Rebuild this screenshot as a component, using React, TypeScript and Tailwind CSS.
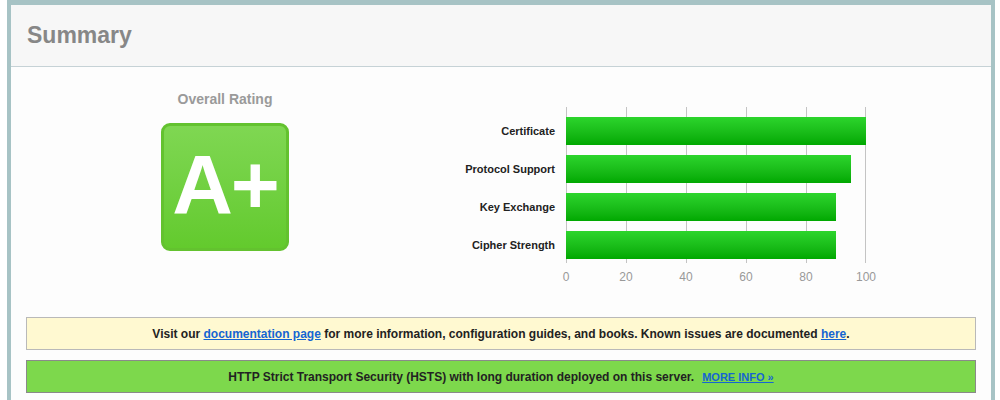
const bars = [
  { label: "Certificate", value: 100 },
  { label: "Protocol Support", value: 95 },
  { label: "Key Exchange", value: 90 },
  { label: "Cipher Strength", value: 90 },
];

const ticks = [0, 20, 40, 60, 80, 100];

function RatingChart() {
  return (
    <div className="flex">
      <div className="flex w-[127px] flex-col gap-[10px] pt-[10px] pr-[11px]">
        {bars.map(b => (
          <div key={b.label} className="flex h-[28px] items-center justify-end text-[11px] font-bold text-[#222]">
            {b.label}
          </div>
        ))}
      </div>
      <div className="w-[300px]">
        <div className="relative h-[156px]">
          {ticks.map(t => (
            <div
              key={t}
              className="absolute top-0 bottom-0 w-px bg-[#c4c4c4]"
              style={{ left: `${t * 3 - (t === 100 ? 1 : 0)}px` }}
            />
          ))}
          <div className="relative flex flex-col gap-[10px] pt-[10px]">
            {bars.map(b => (
              <div
                key={b.label}
                className="h-[28px] bg-gradient-to-b from-[#2cd52c] to-[#00a800]"
                style={{ width: `${b.value * 3}px` }}
              />
            ))}
          </div>
        </div>
        <div className="relative h-[20px] text-[12px] text-[#999]">
          {ticks.map(t => (
            <span
              key={t}
              className="absolute top-[5px] -translate-x-1/2"
              style={{ left: `${t * 3}px` }}
            >
              {t}
            </span>
          ))}
        </div>
      </div>
    </div>
  );
}

export default function App() {
  return (
    <div className="h-[400px] w-[1000px] overflow-hidden bg-white pl-[7px] pr-[5px] font-['Liberation_Sans',Arial,sans-serif]">
      <div className="h-[420px] border-x-[4px] border-t-[5px] border-[#a7c3c5] bg-[#fdfdfd]">
        <div className="flex h-[62px] items-center border-b border-[#c6d2d6] bg-[#f7f7f7] px-[16px]">
          <h1 className="text-[23px] font-bold text-[#878787]">Summary</h1>
        </div>
        <div className="flex">
          <div className="flex w-[428px] flex-col items-center pt-[22px]">
            <div className="text-[14px] font-bold text-[#9a9a9a]">Overall Rating</div>
            <div className="mt-[13px] flex h-[128px] w-[128px] items-center justify-center rounded-[9px] border-[3px] border-[#63c22f] bg-gradient-to-b from-[#7fd752] to-[#63ca2d]">
              <span className="pb-[4px] text-[84px] leading-none font-bold tracking-[-2px] text-white">A+</span>
            </div>
          </div>
          <div className="pt-[40px]">
            <RatingChart />
          </div>
        </div>
        <div className="mt-[34px] flex flex-col gap-[10px] px-[15px]">
          <div className="flex h-[33px] items-center justify-center border border-[#b9b9b9] bg-[#fff9d1] text-[12px] font-bold text-[#222]">
            <span>
              Visit our{" "}
              <a href="#" className="text-[#1565d2] underline">documentation page</a>{" "}
              for more information, configuration guides, and books. Known issues are documented{" "}
              <a href="#" className="text-[#1565d2] underline">here</a>.
            </span>
          </div>
          <div className="flex h-[33px] items-center justify-center border border-[#8a8a8a] bg-[#7dd84c] text-[12px] font-bold text-[#222]">
            <span>
              HTTP Strict Transport Security (HSTS) with long duration deployed on this server.
              <a href="#" className="ml-[8px] text-[11px] text-[#1565d2] underline">MORE INFO »</a>
            </span>
          </div>
        </div>
      </div>
    </div>
  );
}
